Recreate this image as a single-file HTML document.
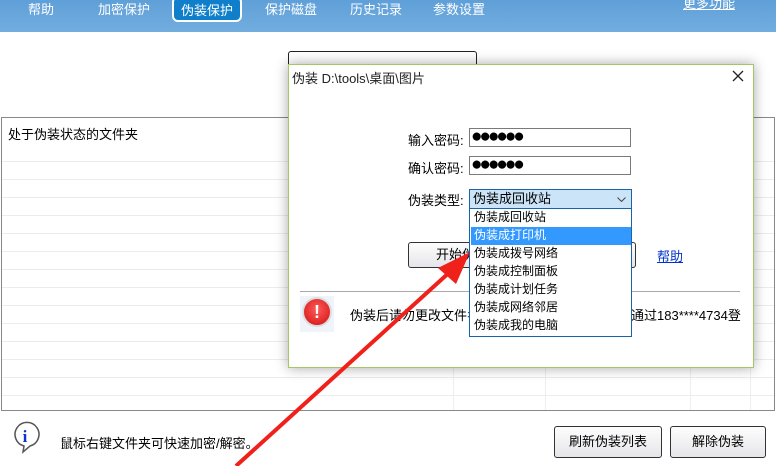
<!DOCTYPE html>
<html><head><meta charset="utf-8"><style>
*{margin:0;padding:0;box-sizing:border-box}
body{width:776px;height:466px;overflow:hidden;background:#fff;position:relative;font-family:"Liberation Sans","Noto Sans CJK SC",sans-serif;font-size:12px;color:#000}
.a{position:absolute}
.top{left:0;top:0;width:776px;height:32px;background:linear-gradient(#5f9fd8,#72addf)}
.tab{top:0;color:#fff;font-size:13px;line-height:20px}
.grid{left:1px;top:117px;width:774px;height:294px;border:1px solid #888;background:repeating-linear-gradient(#fff 0 17px,#ececec 17px 18px);background-position:0 26px}
.btn{border:1px solid #333;border-radius:3px;background:linear-gradient(#fdfdfd,#e6e6ea);text-align:center;font-size:13px}
.inp{border:1px solid #7a7a7a;background:#fff;font-size:19px;letter-spacing:-3px;line-height:16px;padding-left:1px}
.item{left:1px;width:160px;height:18px;line-height:17px;padding-left:3px;font-size:12px}
</style></head><body>
<div class="a top"></div>
<div class="a tab" style="left:28px">帮助</div>
<div class="a tab" style="left:98px">加密保护</div>
<div class="a" style="left:172px;top:-4px;width:70px;height:26px;background:#0f7fcb;border:2px solid #fff;border-radius:6px;color:#fff;font-size:13px;line-height:26px;text-align:center">伪装保护</div>
<div class="a tab" style="left:265px">保护磁盘</div>
<div class="a tab" style="left:350px">历史记录</div>
<div class="a tab" style="left:433px">参数设置</div>
<div class="a tab" style="left:683px;text-decoration:underline;top:-6px">更多功能</div>

<div class="a grid"></div>
<div class="a" style="left:2px;top:118px;width:772px;height:26px;background:#fff"></div>
<div class="a" style="left:8px;top:124px;font-size:13px">处于伪装状态的文件夹</div>
<div class="a" style="left:453px;top:144px;width:1px;height:266px;background:#eee"></div>
<div class="a" style="left:545px;top:144px;width:1px;height:266px;background:#eee"></div>
<div class="a" style="left:690px;top:144px;width:1px;height:266px;background:#eee"></div>
<div class="a" style="left:750px;top:144px;width:1px;height:266px;background:#eee"></div>

<div class="a" style="left:288px;top:51px;width:189px;height:20px;border:1px solid #222;border-radius:3px;background:#fff"></div>

<div class="a" style="left:288px;top:64px;width:466px;height:304px;border:1px solid #a6c46a;background:#fff;box-shadow:0 0 12px rgba(0,0,0,.35)"></div>
<div class="a" style="left:292px;top:68px;font-size:13px;color:#222">伪装 D:\tools\桌面\图片</div>
<svg class="a" style="left:732px;top:70px" width="12" height="12"><path d="M1 1L11 11M11 1L1 11" stroke="#222" stroke-width="1.3"/></svg>

<div class="a" style="left:408px;top:130px;font-size:13px">输入密码:</div>
<div class="a inp" style="left:469px;top:128px;width:162px;height:19px">●●●●●●</div>
<div class="a" style="left:408px;top:158px;font-size:13px">确认密码:</div>
<div class="a inp" style="left:469px;top:156px;width:162px;height:19px">●●●●●●</div>
<div class="a" style="left:408px;top:190px;font-size:13px">伪装类型:</div>
<div class="a" style="left:469px;top:189px;width:163px;height:20px;border:1px solid #1565a8;background:#cce4f7;font-size:13px;line-height:18px;padding-left:3px">伪装成回收站<svg style="position:absolute;right:5px;top:7px" width="9" height="5"><path d="M0.5 0.5L4.5 4.5L8.5 0.5" stroke="#444" fill="none"/></svg></div>

<div class="a btn" style="left:408px;top:242px;width:228px;height:26px;line-height:24px;padding-right:120px">开始伪装</div>
<div class="a" style="left:657px;top:246px;color:#0033cc;text-decoration:underline;font-size:13px">帮助</div>
<div class="a" style="left:300px;top:291px;width:440px;height:1px;background:#aaa"></div>
<div class="a" style="left:300px;top:296px;width:34px;height:36px;background:#eef4fa"></div>
<div class="a" style="left:302px;top:297px;width:30px;height:30px;border-radius:50%;background:radial-gradient(circle at 50% 40%,#ff5a5a,#d01010);border:2px solid #ddd;color:#fff;font-weight:bold;text-align:center;line-height:26px;font-size:18px">!</div>
<div class="a" style="left:350px;top:305px;font-size:13px">伪装后请勿更改文件名</div>
<div class="a" style="left:631px;top:305px;font-size:13px">通过183****4734登</div>

<div class="a" style="left:469px;top:208px;width:163px;height:129px;border:1px solid #1565a8;background:#fff;font-size:13px">
<div class="a item" style="top:0">伪装成回收站</div>
<div class="a item" style="top:18px;background:#3399ff;color:#fff">伪装成打印机</div>
<div class="a item" style="top:36px">伪装成拨号网络</div>
<div class="a item" style="top:54px">伪装成控制面板</div>
<div class="a item" style="top:72px">伪装成计划任务</div>
<div class="a item" style="top:90px">伪装成网络邻居</div>
<div class="a item" style="top:108px">伪装成我的电脑</div>
</div>

<svg class="a" style="left:8px;top:420px" width="36" height="36"><path d="M15 32 L16 26 A12 12 0 1 1 22 26 Z" fill="#fff" stroke="#555" stroke-width="1.5"/><text x="17" y="22" font-family="Liberation Serif,serif" font-weight="bold" font-size="17" fill="#1030d0" text-anchor="middle">i</text></svg>
<div class="a" style="left:60px;top:433px;font-size:13px">鼠标右键文件夹可快速加密/解密。</div>
<div class="a btn" style="left:554px;top:426px;width:108px;height:32px;line-height:30px">刷新伪装列表</div>
<div class="a btn" style="left:670px;top:426px;width:96px;height:32px;line-height:30px">解除伪装</div>

<svg class="a" style="left:0;top:0" width="776" height="466"><line x1="236" y1="466" x2="452" y2="270" stroke="#f0201a" stroke-width="4"/><polygon points="470,252 438,268 456,284" fill="#f0201a"/></svg>
</body></html>
